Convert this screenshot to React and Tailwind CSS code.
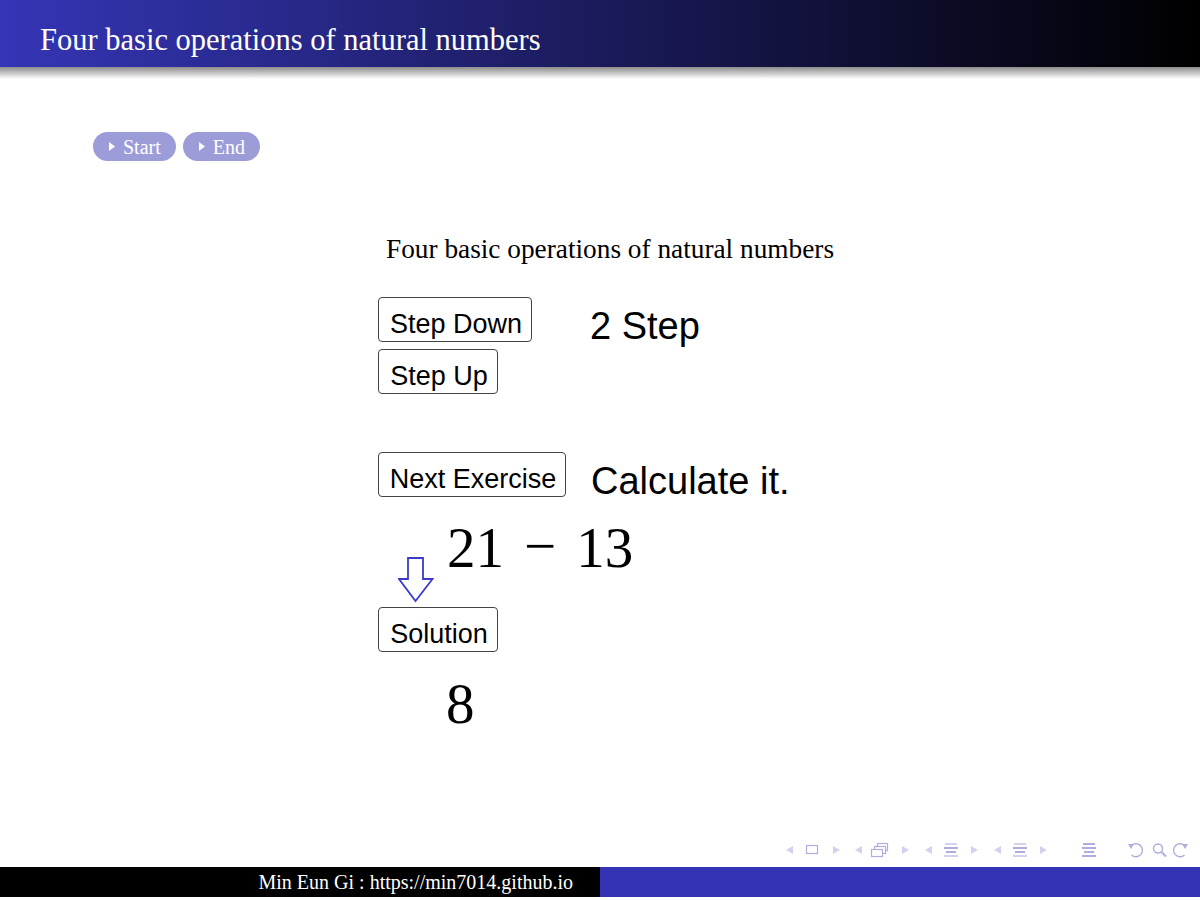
import React from "react";

const serif = { fontFamily: '"Liberation Serif", "Times New Roman", serif' };

function Tri({ x, y, dir, c = "#d2d2f0" }) {
  const p =
    dir === "l"
      ? `${x + 7},${y} ${x},${y + 4} ${x + 7},${y + 8}`
      : `${x},${y} ${x + 7},${y + 4} ${x},${y + 8}`;
  return <polygon points={p} fill={c} />;
}

function Lines({ x, y, c = "#aeaede", soft = "#d2d2f0" }) {
  return (
    <g>
      <rect x={x + 1} y={y} width={12} height={2} fill={soft} />
      <rect x={x} y={y + 4} width={14} height={2} fill={c} />
      <rect x={x + 2} y={y + 8} width={10} height={2} fill={c} />
      <rect x={x} y={y + 12} width={14} height={2} fill={soft} />
    </g>
  );
}

function NavBar() {
  const c = "#aeaede";
  const ox = 780;
  const oy = 838;
  return (
    <svg width="420" height="24" viewBox={`${ox} ${oy} 420 24`}>
      <Tri x={786} y={846} dir="l" />
      <rect x={806.5} y={845.5} width={11} height={8} fill="none" stroke={c} strokeWidth="1.2" />
      <Tri x={833} y={846} dir="r" />
      <Tri x={855} y={846} dir="l" />
      <rect x={877.5} y={843.5} width={10} height={7} fill="white" stroke={c} strokeWidth="1.2" />
      <rect x={874.5} y={846.5} width={11} height={7} fill="white" stroke={c} strokeWidth="1.2" />
      <rect x={871.5} y={849.5} width={11} height={7} fill="white" stroke={c} strokeWidth="1.2" />
      <Tri x={902} y={846} dir="r" />
      <Tri x={925} y={846} dir="l" />
      <Lines x={944} y={843} />
      <Tri x={971} y={846} dir="r" />
      <Tri x={994} y={846} dir="l" />
      <Lines x={1013} y={843} />
      <Tri x={1040} y={846} dir="r" />
      <Lines x={1082} y={843} soft={c} />
      <path d="M1131 846 A6.5 6.5 0 1 1 1131.5 855" fill="none" stroke={c} strokeWidth="1.4" />
      <polygon points="1128,844 1134,844 1131,849" fill={c} />
      <circle cx="1158" cy="848.5" r="4.5" fill="none" stroke={c} strokeWidth="1.4" />
      <line x1="1161.5" y1="852" x2="1166" y2="856.5" stroke={c} strokeWidth="2" />
      <path d="M1185 846 A6.5 6.5 0 1 0 1184.5 855" fill="none" stroke={c} strokeWidth="1.4" />
      <polygon points="1188,844 1182,844 1185,849" fill={c} />
    </svg>
  );
}

function Btn({ w, children }) {
  return (
    <div
      className="h-[45px] shrink-0 border border-[#444] rounded-[4px] flex items-center justify-center pt-[9px] pl-[2px] text-[27px] text-black bg-white leading-none"
      style={{ width: w, fontFamily: '"Liberation Sans", Arial, sans-serif' }}
    >
      {children}
    </div>
  );
}

function Pill({ children }) {
  return (
    <div className="h-[29px] rounded-full bg-[#9c9cd8] flex items-center pl-[16px] pr-[15px] gap-[8px] text-white text-[20px] leading-none" style={serif}>
      <svg width="6" height="9" viewBox="0 0 6 9">
        <polygon points="0,0 6,4.5 0,9" fill="white" />
      </svg>
      <span>{children}</span>
    </div>
  );
}

export default function App() {
  const sans = { fontFamily: '"Liberation Sans", Arial, sans-serif' };
  return (
    <div className="w-[1200px] h-[900px] flex flex-col bg-white overflow-hidden">
      <div className="h-[67px] shrink-0 bg-[linear-gradient(to_right,#3535b6,#000000)] flex items-center pl-[40px] pt-[13px]">
        <span className="text-white text-[30.5px] leading-none" style={serif}>
          Four basic operations of natural numbers
        </span>
      </div>
      <div className="h-[12px] shrink-0 bg-[linear-gradient(to_bottom,#8c8c8c,#ffffff)]" />

      <div className="flex-1 flex flex-col">
        <div className="flex gap-[7px] pl-[93px] mt-[53px]">
          <Pill>Start</Pill>
          <Pill>End</Pill>
        </div>

        <div className="ml-[378px] flex flex-col">
          <div className="mt-[73px] ml-[8px] h-[32px] flex items-center text-[27.3px] leading-none text-black" style={serif}>
            Four basic operations of natural numbers
          </div>

          <div className="mt-[31px] h-[45px] flex items-start">
            <Btn w={154}>Step Down</Btn>
            <span className="ml-[58px] mt-[10px] text-[38px] leading-none text-black" style={sans}>
              2 Step
            </span>
          </div>
          <div className="mt-[7px]">
            <Btn w={120}>Step Up</Btn>
          </div>

          <div className="mt-[58px] h-[45px] flex items-start">
            <Btn w={188}>Next Exercise</Btn>
            <span className="ml-[25px] mt-[10px] text-[38px] leading-none text-black" style={sans}>
              Calculate it.
            </span>
          </div>

          <div className="h-[79px] ml-[69px] flex items-end text-[57px] leading-none text-black" style={serif}>
            <span>21</span>
            <span className="mx-[20px] -translate-y-[2px]">−</span>
            <span>13</span>
          </div>

          <div className="ml-[20px] h-[45px] mt-[-19px]">
            <svg width="36" height="46" viewBox="0 0 36 46">
              <polygon
                points="10,1 25,1 25,22 34.5,22 17.5,44 1,22 10,22"
                fill="white"
                stroke="#3b3bc8"
                strokeWidth="1.8"
                strokeLinejoin="miter"
              />
            </svg>
          </div>

          <div className="mt-[5px]">
            <Btn w={120}>Solution</Btn>
          </div>

          <div className="ml-[68px] mt-[23px] text-[57px] leading-none text-black" style={serif}>
            8
          </div>
        </div>

        <div className="mt-auto flex justify-end mb-[5px]">
          <NavBar />
        </div>
      </div>

      <div className="h-[30px] shrink-0 flex">
        <div className="w-[600px] bg-black flex items-center justify-end pr-[27px] text-white text-[20px] leading-none" style={serif}>
          Min Eun Gi : https://min7014.github.io
        </div>
        <div className="flex-1 bg-[#3333b3]" />
      </div>
      <div className="h-[3px] shrink-0 bg-white" />
    </div>
  );
}
